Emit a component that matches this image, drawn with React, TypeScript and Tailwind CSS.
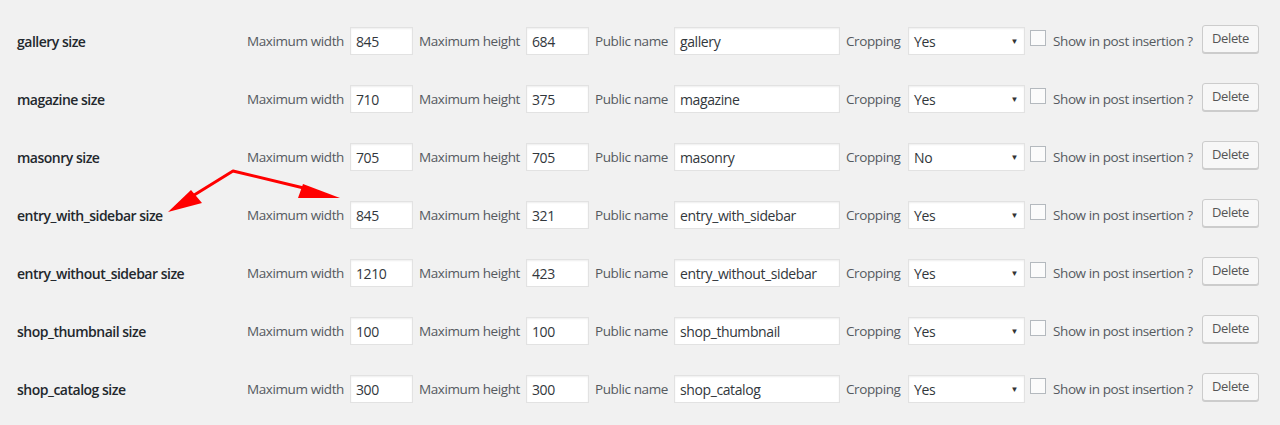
import React from "react";

type Row = { name: string; w: string; h: string; pub: string; crop: string };

const rows: Row[] = [
  { name: "gallery", w: "845", h: "684", pub: "gallery", crop: "Yes" },
  { name: "magazine", w: "710", h: "375", pub: "magazine", crop: "Yes" },
  { name: "masonry", w: "705", h: "705", pub: "masonry", crop: "No" },
  { name: "entry_with_sidebar", w: "845", h: "321", pub: "entry_with_sidebar", crop: "Yes" },
  { name: "entry_without_sidebar", w: "1210", h: "423", pub: "entry_without_sidebar", crop: "Yes" },
  { name: "shop_thumbnail", w: "100", h: "100", pub: "shop_thumbnail", crop: "Yes" },
  { name: "shop_catalog", w: "300", h: "300", pub: "shop_catalog", crop: "Yes" },
];

const font = { fontFamily: '"Open Sans", "Noto Sans", sans-serif' };

function Field({ value, w }: { value: string; w: string }) {
  return (
    <div
      className={`${w} h-[28px] shrink-0 bg-white border border-[#e2e2e2] shadow-[inset_0_1px_2px_rgba(0,0,0,0.07)] flex items-center px-[5px] text-[14px] text-[#32373c] whitespace-nowrap overflow-hidden`}
    >
      {value}
    </div>
  );
}

export default function App() {
  return (
    <div className="w-[1280px] h-[425px] bg-[#f1f1f1] relative overflow-hidden tracking-[-0.4px]" style={font}>
      <div className="pt-[12px]">
        {rows.map((r) => (
          <div key={r.name} className="h-[58px] flex items-center">
            <div className="w-[247px] shrink-0 pl-[17px] text-[14px] font-semibold text-[#23282d] tracking-[-0.5px]">{r.name} size</div>
            <div className="flex items-center text-[13.5px] text-[#555a5f] whitespace-nowrap">
              <span className="w-[98px] shrink-0 mr-[5px]">Maximum width</span>
              <Field value={r.w} w="w-[63px]" />
              <span className="w-[102px] shrink-0 ml-[6px] mr-[5px]">Maximum height</span>
              <Field value={r.h} w="w-[63px]" />
              <span className="w-[74px] shrink-0 ml-[6px] mr-[5px]">Public name</span>
              <Field value={r.pub} w="w-[166px]" />
              <span className="w-[57px] shrink-0 ml-[6px] mr-[5px]">Cropping</span>
              <div className="w-[117px] h-[28px] shrink-0 bg-white border border-[#e2e2e2] shadow-[inset_0_1px_2px_rgba(0,0,0,0.07)] flex items-center justify-between pl-[5px] pr-[6px] text-[14px] text-[#32373c]">
                <span>{r.crop}</span>
                <span className="text-[8px] text-[#333]">▼</span>
              </div>
              <div className="ml-[5px] mr-[7px] w-[16px] h-[16px] shrink-0 bg-[#fbfbfb] border border-[#b4b9be] -mt-[6px]" />
              <span className="w-[144px] shrink-0 mr-[5px]">Show in post insertion ?</span>
              <div className="-mt-[4px] w-[57px] h-[28px] shrink-0 justify-center flex items-center rounded-[3px] bg-[#f7f7f7] border border-[#cccccc] shadow-[0_1px_0_#cccccc] text-[13px] text-[#555]">
                Delete
              </div>
            </div>
          </div>
        ))}
      </div>
      <svg className="absolute left-0 top-0" width="1280" height="425" viewBox="0 0 1280 425">
        <g stroke="#f00" strokeWidth="3" fill="none" strokeLinecap="round" strokeLinejoin="round">
          <polyline points="178,205 233,171 312,190" />
        </g>
        <polygon points="168,212 191,190 202,203" fill="#f00" />
        <polygon points="340,198 303,184 298,198" fill="#f00" />
      </svg>
    </div>
  );
}
